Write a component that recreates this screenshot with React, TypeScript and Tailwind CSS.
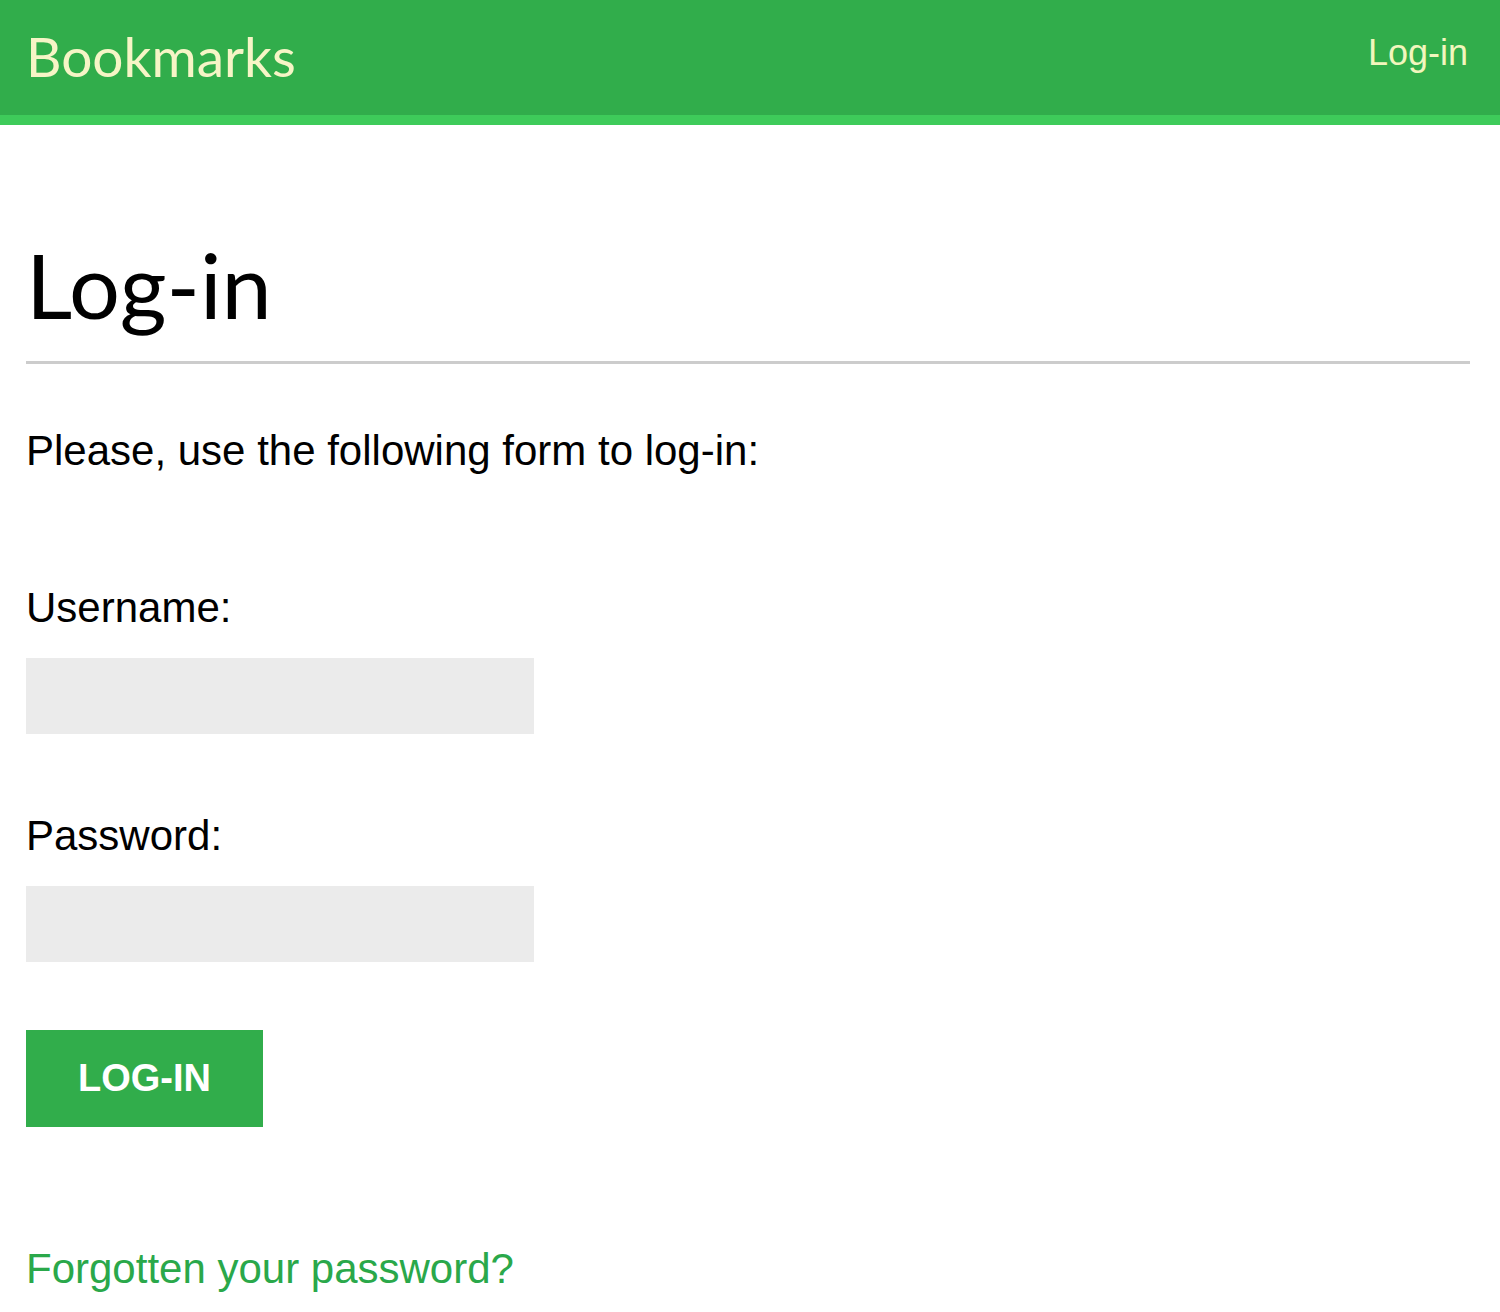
export default function App() {
  return (
    <div className="min-h-[1312px] bg-white" style={{ fontFamily: '"Liberation Sans", Arial, sans-serif' }}>
      {/* Header */}
      <header className="flex h-[125px] items-start justify-between border-b-[10px] border-[#3ecb5a] bg-[#31ad4b] pl-[26px] pr-[32px] pt-[24px]">
        <span className="text-[55px] leading-[64px] text-[#f6f5c6]" style={{ fontFamily: 'Lato, "Open Sans", sans-serif' }}>
          Bookmarks
        </span>
        <a className="mt-[5px] text-[36px] leading-[48px] text-[#f1f6bd]" href="#">
          Log-in
        </a>
      </header>

      <main className="pl-[26px] pr-[30px]">
        <h1
          className="mt-[109px] text-[90px] leading-[100px] text-black"
          style={{ fontFamily: 'Lato, "Open Sans", sans-serif' }}
        >
          Log-in
        </h1>
        <hr className="mt-[27px] border-t-[3px] border-[#cccccc]" />

        <p className="mt-[62px] text-[42px] leading-[50px] text-black">Please, use the following form to log-in:</p>

        <form className="mt-[109px] flex flex-col">
          <label className="text-[42px] leading-[46px] text-black">Username:</label>
          <input type="text" className="mt-[27px] h-[76px] w-[508px] bg-[#ebebeb] outline-none" />

          <label className="mt-[79px] text-[42px] leading-[46px] text-black">Password:</label>
          <input type="password" className="mt-[27px] h-[76px] w-[508px] bg-[#ebebeb] outline-none" />

          <button
            type="button"
            className="mt-[68px] h-[97px] w-[237px] bg-[#31ad4b] text-[38px] font-bold uppercase text-white"
          >
            Log-in
          </button>
        </form>

        <a href="#" className="mt-[117px] block text-[42px] leading-[50px] text-[#2aa84a]">
          Forgotten your password?
        </a>
      </main>
    </div>
  );
}
